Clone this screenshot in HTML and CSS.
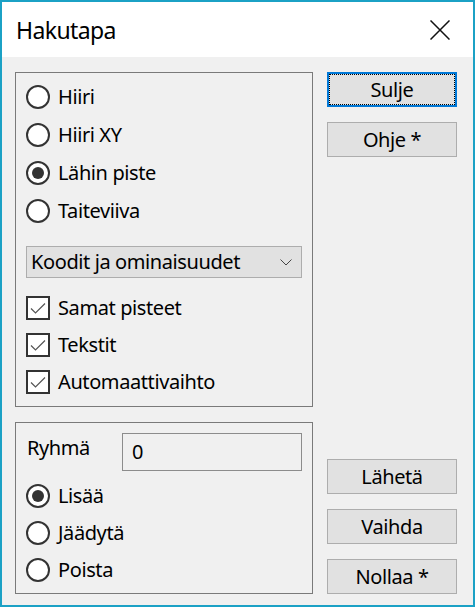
FILE: index.html
```html
<!DOCTYPE html>
<html lang="fi">
  <head>
    <meta charset="UTF-8" />
    <title>Hakutapa</title>
    <link rel="stylesheet" href="styles.css">
  </head>
  <body>
    <div class="window">
      <!-- Title bar -->
      <div class="titlebar">
        <span class="title">Hakutapa</span>
        <svg class="close" width="20" height="20" viewBox="0 0 20 20">
          <path d="M0.5 0.5 L19.5 19.5 M19.5 0.5 L0.5 19.5" />
        </svg>
      </div>

      <div class="content">
        <div class="left">
          <!-- Search mode -->
          <div class="group group-mode">
            <div class="row"><span class="radio"></span>Hiiri</div>
            <div class="row"><span class="radio"></span>Hiiri XY</div>
            <div class="row"><span class="radio checked"></span>Lähin piste</div>
            <div class="row"><span class="radio"></span>Taiteviiva</div>

            <div class="combo">
              <span>Koodit ja ominaisuudet</span>
              <svg class="chevron" width="12" height="7" viewBox="0 0 12 7">
                <path d="M0.5 0.5 L6 6 L11.5 0.5" />
              </svg>
            </div>

            <div class="checks">
              <div class="row check">
                <span class="box"><svg width="20" height="20" viewBox="0 0 20 20"><path d="M3 10.5 L7.5 15 L17 5.5" /></svg></span>Samat pisteet
              </div>
              <div class="row check">
                <span class="box"><svg width="20" height="20" viewBox="0 0 20 20"><path d="M3 10.5 L7.5 15 L17 5.5" /></svg></span>Tekstit
              </div>
              <div class="row check">
                <span class="box"><svg width="20" height="20" viewBox="0 0 20 20"><path d="M3 10.5 L7.5 15 L17 5.5" /></svg></span>Automaattivaihto
              </div>
            </div>
          </div>

          <!-- Group -->
          <div class="group group-set">
            <div class="field">
              <span class="field-label">Ryhmä</span>
              <div class="edit">0</div>
            </div>
            <div class="row short"><span class="radio checked"></span>Lisää</div>
            <div class="row short"><span class="radio"></span>Jäädytä</div>
            <div class="row short"><span class="radio"></span>Poista</div>
          </div>
        </div>

        <div class="buttons">
          <div class="btn-stack">
            <button class="btn default">Sulje</button>
            <button class="btn">Ohje *</button>
          </div>
          <div class="btn-stack">
            <button class="btn">Lähetä</button>
            <button class="btn">Vaihda</button>
            <button class="btn">Nollaa *</button>
          </div>
        </div>
      </div>
    </div>
  </body>
</html>
```

FILE: styles.css
```css
* {
  margin: 0;
  padding: 0;
  box-sizing: border-box;
}

body {
  font-family: "Noto Sans", "Open Sans", sans-serif;
  font-size: 20px;
  letter-spacing: -0.4px;
  color: #000;
  background: #f0f0f0;
}

.window {
  width: 475px;
  height: 607px;
  border: 2px solid #1ba1c5;
  background: #f0f0f0;
  display: flex;
  flex-direction: column;
}

/* Title bar */
.titlebar {
  height: 55px;
  flex-shrink: 0;
  background: #fff;
  display: flex;
  align-items: center;
  justify-content: space-between;
  padding: 0 23px 0 14px;
}

.title {
  font-size: 23px;
  letter-spacing: -0.6px;
  line-height: 1;
  margin-top: 1px;
}

.close path {
  stroke: #111;
  stroke-width: 1.5;
  fill: none;
}

.content {
  flex: 1;
  display: flex;
  gap: 14px;
  padding: 15px 0 0 13px;
}

.left {
  width: 298px;
  display: flex;
  flex-direction: column;
  gap: 15px;
}

.group {
  border: 1px solid #7a7a7a;
  padding: 0 10px;
}

.group-mode {
  height: 335px;
  padding-top: 5px;
}

.group-set {
  height: 172px;
  padding-top: 10px;
}

.row {
  height: 38px;
  display: flex;
  align-items: center;
  gap: 8px;
  line-height: 1;
  white-space: nowrap;
}

.row.short,
.row.check {
  height: 37px;
}

.radio {
  width: 24px;
  height: 24px;
  flex-shrink: 0;
  border: 2px solid #333;
  border-radius: 50%;
  background: #fff;
  display: flex;
  align-items: center;
  justify-content: center;
}

.radio.checked::after {
  content: "";
  width: 12px;
  height: 12px;
  border-radius: 50%;
  background: #333;
}

/* Drop-down */
.combo {
  margin-top: 16px;
  height: 32px;
  border: 1px solid #adadad;
  background: #e1e1e1;
  display: flex;
  align-items: center;
  justify-content: space-between;
  padding: 0 9px 0 4px;
  line-height: 1;
}

.chevron path {
  stroke: #444;
  stroke-width: 1;
  fill: none;
}

.checks {
  margin-top: 11px;
}

.box {
  width: 24px;
  height: 24px;
  flex-shrink: 0;
  border: 2px solid #333;
  background: #fff;
  display: flex;
}

.box path {
  stroke: #555;
  stroke-width: 1.2;
  fill: none;
}

/* Group number */
.field {
  display: flex;
  align-items: flex-start;
  margin-bottom: 6px;
}

.field-label {
  width: 96px;
  line-height: 1;
  margin-top: 5px;
  padding-left: 1px;
}

.edit {
  width: 180px;
  height: 38px;
  border: 1px solid #8c8c8c;
  background: #f0f0f0;
  display: flex;
  align-items: center;
  padding-left: 9px;
  line-height: 1;
}

/* Buttons */
.buttons {
  width: 130px;
  display: flex;
  flex-direction: column;
  justify-content: space-between;
  padding-bottom: 11px;
}

.btn-stack {
  display: flex;
  flex-direction: column;
  gap: 15px;
}

.btn {
  height: 35px;
  width: 100%;
  border: 1px solid #adadad;
  background: #e1e1e1;
  font-family: inherit;
  font-size: 20px;
  letter-spacing: -0.4px;
  line-height: 1;
  color: #000;
}

.btn.default {
  border: 2px solid #0078d7;
  outline: 1px dotted #000;
  outline-offset: -3px;
}
```
